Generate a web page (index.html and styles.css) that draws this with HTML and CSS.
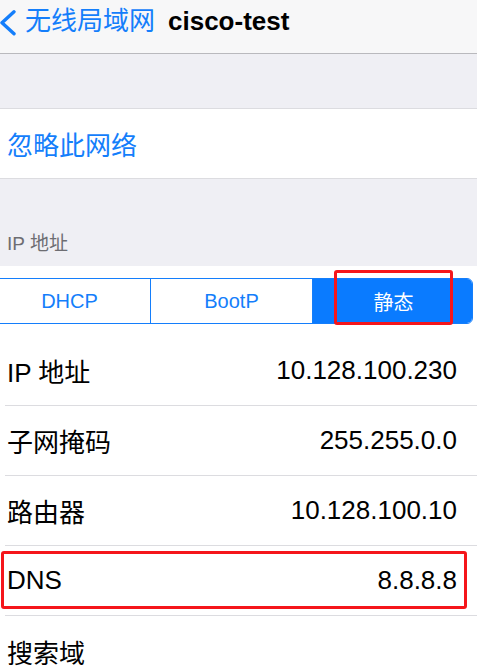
FILE: index.html
```html
<!DOCTYPE html>
<html lang="zh-CN">
<head>
<meta charset="utf-8">
<link rel="stylesheet" href="styles.css">
</head>
<body>
<header class="nav">
  <svg class="chev" width="17" height="26" viewBox="0 0 17 26"><polyline points="14,1.8 2,12.8 14,23.8" fill="none" stroke="#147efb" stroke-width="3.4" stroke-linecap="round" stroke-linejoin="round"/></svg>
  <span class="back">无线局域网</span>
  <span class="title">cisco-test</span>
</header>
<div class="gap1"></div>
<div class="forget">忽略此网络</div>
<div class="section-head">IP 地址</div>
<div class="seg-wrap">
  <div class="seg">
    <div class="seg-item">DHCP</div>
    <div class="seg-item">BootP</div>
    <div class="seg-item active">静态</div>
  </div>
  <div class="mark mark-seg"></div>
</div>
<div class="list">
  <div class="row"><span>IP 地址</span><span>10.128.100.230</span></div>
  <div class="row"><span>子网掩码</span><span>255.255.0.0</span></div>
  <div class="row"><span>路由器</span><span>10.128.100.10</span></div>
  <div class="row"><span>DNS</span><span>8.8.8.8</span><div class="mark mark-row"></div></div>
  <div class="row"><span>搜索域</span><span></span></div>
</div>
</body>
</html>
```
FILE: styles.css
```css
* { box-sizing: border-box; }
html, body { margin: 0; padding: 0; }
body {
  width: 477px;
  height: 672px;
  overflow: hidden;
  background: #efeff4;
  font-family: "Liberation Sans", "Noto Sans CJK SC", sans-serif;
  color: #000;
}
.nav {
  height: 54px;
  background: #f7f7f8;
  border-bottom: 1px solid #b9b9bd;
  display: flex;
  align-items: flex-start;
  padding-top: 6px;
}
.chev { margin-right: 8px; margin-top: 4px; flex: none; }
.back { color: #147efb; font-size: 26px; line-height: 30px; }
.title { font-weight: bold; font-size: 26px; line-height: 30px; margin-left: 13px; }
.gap1 { height: 54px; }
.forget {
  height: 71px;
  background: #fff;
  border-top: 1px solid #dcdce0;
  border-bottom: 1px solid #dcdce0;
  color: #147efb;
  font-size: 26px;
  display: flex;
  align-items: center;
  padding-left: 7px;
}
.section-head {
  height: 87px;
  color: #6d6d72;
  font-size: 19px;
  padding-left: 7px;
  display: flex;
  align-items: flex-end;
  padding-bottom: 11px;
}
.seg-wrap {
  position: relative;
  background: #fff;
  padding: 12px 0;
  height: 70px;
}
.seg {
  display: grid;
  grid-template-columns: 162px 162px 161px;
  margin-left: -12px;
  width: 485px;
  height: 46px;
  border: 1.5px solid #147efb;
  border-radius: 6px;
  overflow: hidden;
}
.seg-item {
  display: flex;
  align-items: center;
  justify-content: center;
  color: #147efb;
  font-size: 20px;
  border-right: 1.5px solid #147efb;
}
.seg-item.active {
  background: #0a7bff;
  color: #fff;
  border-right: none;
}
.mark {
  position: absolute;
  border: 3px solid #f5161b;
  border-radius: 3px;
}
.mark-seg { left: 334px; top: 4px; width: 119px; height: 55px; }
.list { background: #fff; }
.row {
  position: relative;
  height: 70px;
  margin-left: 5px;
  padding: 0 20px 0 2px;
  border-bottom: 1px solid #dcdce0;
  display: flex;
  justify-content: space-between;
  align-items: center;
  font-size: 26px;
}
.row:last-child { border-bottom: none; }
.mark-row { left: -4px; top: 5px; right: 10px; bottom: 6px; }
```
